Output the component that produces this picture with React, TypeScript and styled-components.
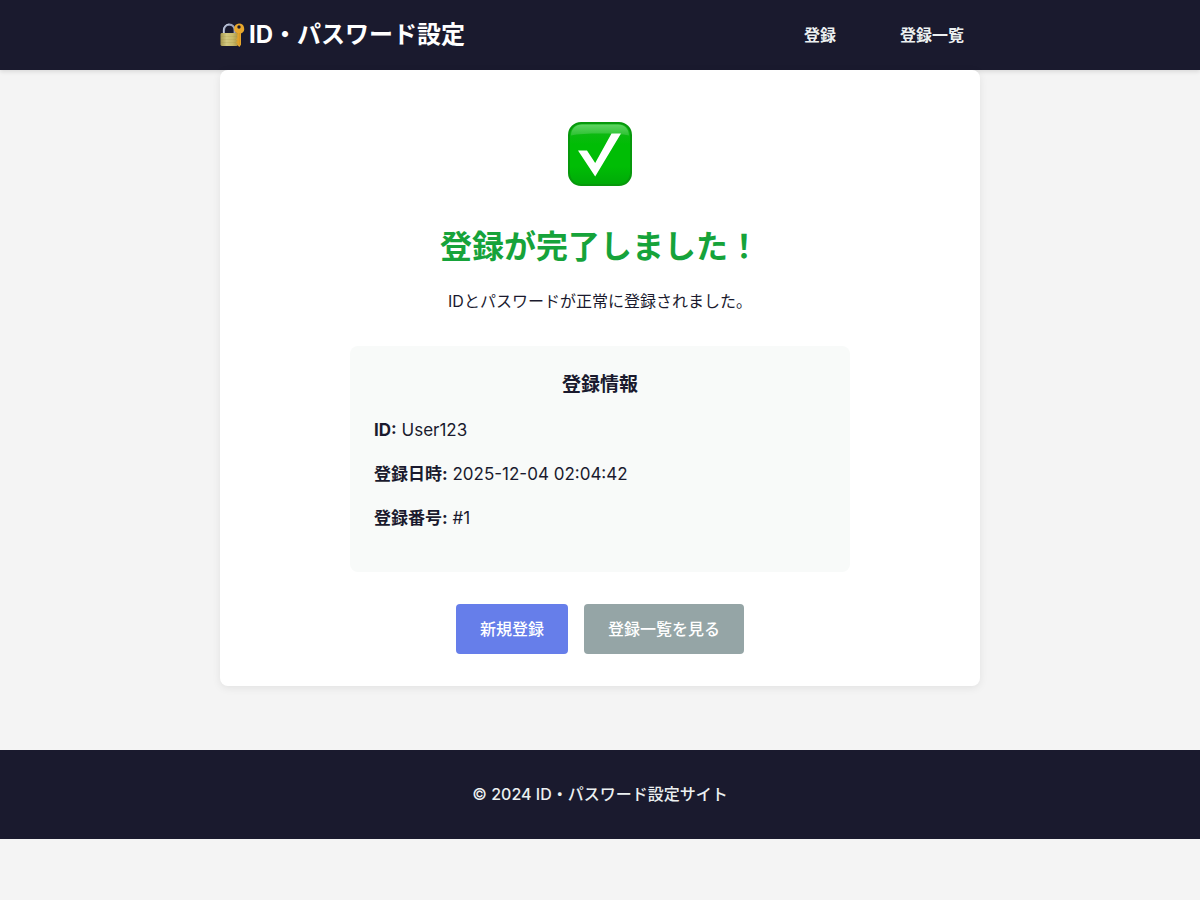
import React from 'react';
import styled, { createGlobalStyle } from 'styled-components';

const GlobalStyle = createGlobalStyle`
  *, *::before, *::after { box-sizing: border-box; margin: 0; padding: 0; }
  body {
    background: #f4f4f4;
    color: #1a1a2e;
    font-family: Inter, "Noto Sans CJK JP", sans-serif;
    font-size: 16px;
    line-height: 26px;
  }
`;

const Header = styled.header`
  background: #1a1a2e;
  box-shadow: 0 2px 4px rgba(0, 0, 0, 0.1);
  padding: 16px 20px;
`;

const HeaderInner = styled.div`
  max-width: 760px;
  margin: 0 auto;
  display: flex;
  align-items: center;
  justify-content: space-between;
`;

const Brand = styled.div`
  display: flex;
  align-items: center;
  gap: 4px;
  color: #fff;
  font-size: 24px;
  line-height: 38px;
  font-weight: 700;
`;

const Nav = styled.nav`
  display: flex;
  gap: 32px;
`;

const NavLink = styled.a`
  padding: 6px 16px;
  color: #ecf0f1;
  font-weight: 600;
  text-decoration: none;
`;

const Main = styled.main`
  max-width: 800px;
  margin: 0 auto;
  padding: 0 20px 64px;
`;

const Card = styled.section`
  background: #fff;
  border-radius: 8px;
  box-shadow: 0 2px 8px rgba(0, 0, 0, 0.08);
  padding: 32px;
  display: flex;
  flex-direction: column;
  align-items: center;
  text-align: center;
`;

const StatusIcon = styled.div`
  height: 104px;
  margin-bottom: 16px;
  display: flex;
  align-items: center;
`;

const Title = styled.h1`
  color: #16a33a;
  font-size: 32px;
  line-height: 50px;
  font-weight: 700;
  margin-bottom: 16px;
`;

const Lead = styled.p`
  margin-bottom: 32px;
`;

const Details = styled.div`
  width: 100%;
  max-width: 500px;
  margin-bottom: 32px;
  padding: 24px 24px 40px;
  background: #f8faf9;
  border-radius: 8px;
  display: flex;
  flex-direction: column;
  gap: 16px;
`;

const DetailsTitle = styled.h2`
  font-size: 19px;
  line-height: 30px;
  font-weight: 700;
`;

const DetailRow = styled.p`
  text-align: left;
  font-size: 17px;
  line-height: 28px;
`;

const Actions = styled.div`
  display: flex;
  flex-wrap: wrap;
  justify-content: center;
  gap: 16px;
`;

const Button = styled.button<{ $tone: 'primary' | 'secondary' }>`
  border: 0;
  border-radius: 4px;
  padding: 12px 24px;
  background: ${({ $tone }) => ($tone === 'primary' ? '#667eea' : '#95a5a6')};
  color: #fff;
  font: inherit;
  font-weight: 500;
  cursor: pointer;
`;

const Footer = styled.footer`
  background: #1a1a2e;
  color: #ecf0f1;
  font-weight: 500;
  text-align: center;
  padding: 32px 20px;
  line-height: 25px;
`;

const LockIcon = () => (
  <svg width="25" height="26" viewBox="0 0 25 26" aria-hidden="true">
    <defs>
      <linearGradient id="lockBody" x1="0" x2="1" y1="0" y2="0">
        <stop offset="0" stopColor="#a89a50" />
        <stop offset="0.35" stopColor="#d3c980" />
        <stop offset="0.7" stopColor="#c9ba68" />
        <stop offset="1" stopColor="#ad9645" />
      </linearGradient>
    </defs>
    <path d="M3.9 13V8.5C3.9 4.8 6.2 2.6 9.3 2.6s5.4 2.2 5.4 5.9V13" fill="none" stroke="#9aa3bd" strokeWidth="2.2" />
    <path d="M3.5 12V8.2C3.7 4.6 6.2 2.2 9.3 2.2" fill="none" stroke="#d4d9e8" strokeWidth="0.8" />
    <rect x="0.5" y="11" width="17.5" height="13" rx="1.4" fill="url(#lockBody)" />
    <path d="M1 14.5h16.5M1 17.5h16.5M1 20.5h16.5" stroke="#8c7d3b" strokeWidth="0.4" opacity="0.35" />
    <path
      fillRule="evenodd"
      d="M19 1.5a5.2 5.2 0 0 1 2 10v11.2L19.3 25l-1.9-2V11.5A5.2 5.2 0 0 1 19 1.5Zm0 1.8a1.7 1.7 0 1 0 0 3.4 1.7 1.7 0 0 0 0-3.4Z"
      fill="#e8a72c"
    />
    <path d="M19.2 11v12" stroke="#c4861c" strokeWidth="0.6" />
    <path d="M17.4 16.2l-1.6 1 1.6 1zM17.4 19.2l-1.6 1 1.6 1z" fill="#e8a72c" />
  </svg>
);

const CheckIcon = () => (
  <svg width="64" height="64" viewBox="0 0 64 64" role="img" aria-label="完了">
    <defs>
      <linearGradient id="checkFill" x1="0" x2="0" y1="0" y2="1">
        <stop offset="0" stopColor="#18b51c" />
        <stop offset="0.35" stopColor="#00bd05" />
        <stop offset="0.7" stopColor="#00bd05" />
        <stop offset="1" stopColor="#00a908" />
      </linearGradient>
      <linearGradient id="checkGloss" x1="0" x2="0" y1="0" y2="1">
        <stop offset="0" stopColor="#5fd463" />
        <stop offset="1" stopColor="#2cc231" />
      </linearGradient>
    </defs>
    <rect x="1" y="1" width="62" height="62" rx="12" fill="url(#checkFill)" stroke="#07980c" strokeWidth="2" />
    <path d="M3 13.5C3 7 7.5 2.5 14 2.5h36c6.500 0 11 4.500 11 11C55 12 43 11.500 32 11.500S9 12 3 13.500Z" fill="url(#checkGloss)" />
    <path d="M10 28.500h9L27.200 41 43.500 11.500H53L27.200 54.500Z" fill="#fff" />
  </svg>
);

const details = [
  { label: 'ID:', value: 'User123' },
  { label: '登録日時:', value: '2025-12-04 02:04:42' },
  { label: '登録番号:', value: '#1' },
];

export default function App() {
  return (
    <>
      <GlobalStyle />
      <Header>
        <HeaderInner>
          <Brand>
            <LockIcon />
            ID・パスワード設定
          </Brand>
          <Nav>
            <NavLink href="#register">登録</NavLink>
            <NavLink href="#list">登録一覧</NavLink>
          </Nav>
        </HeaderInner>
      </Header>
      <Main>
        <Card>
          <StatusIcon>
            <CheckIcon />
          </StatusIcon>
          <Title>登録が完了しました！</Title>
          <Lead>IDとパスワードが正常に登録されました。</Lead>
          <Details>
            <DetailsTitle>登録情報</DetailsTitle>
            {details.map(({ label, value }) => (
              <DetailRow key={label}>
                <strong>{label}</strong> {value}
              </DetailRow>
            ))}
          </Details>
          <Actions>
            <Button type="button" $tone="primary">新規登録</Button>
            <Button type="button" $tone="secondary">登録一覧を見る</Button>
          </Actions>
        </Card>
      </Main>
      <Footer>
        <p>© 2024 ID・パスワード設定サイト</p>
      </Footer>
    </>
  );
}
